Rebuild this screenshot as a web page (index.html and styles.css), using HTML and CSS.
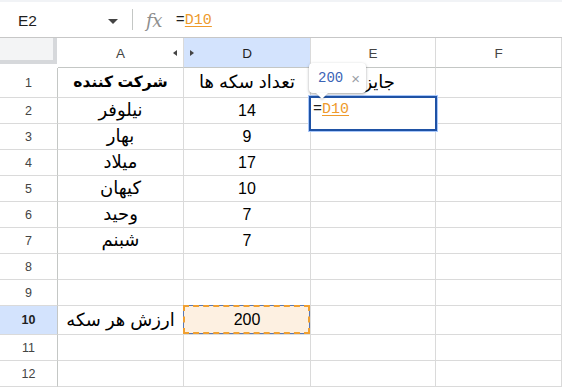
FILE: index.html
```html
<!DOCTYPE html>
<html lang="fa">
<head>
<meta charset="utf-8">
<title>Sheet</title>
<link rel="stylesheet" href="styles.css">
</head>
<body>
<div class="topbar">
  <div class="namebox"><span class="ref">E2</span><span class="caret"></span></div>
  <div class="sep"></div>
  <div class="fx">fx</div>
  <div class="formula">=<span class="refd">D10</span></div>
</div>
<div class="sheet">
  <div class="corner"></div>
  <div class="hdr hdr-a">A</div>
  <div class="hdr hdr-d sel">D</div>
  <div class="hdr">E</div>
  <div class="hdr">F</div>

  <div class="rh">1</div>
  <div class="c fa bold" dir="rtl">شرکت کننده</div>
  <div class="c fa" dir="rtl">تعداد سکه ها</div>
  <div class="c fa e1"><span dir="rtl">جایزه</span>
    <div class="tip" dir="ltr"><span class="tipval">200</span><span class="tipx">×</span></div>
  </div>
  <div class="c"></div>

  <div class="rh">2</div>
  <div class="c fa" dir="rtl">نیلوفر</div>
  <div class="c">14</div>
  <div class="c e2"><div class="editor" dir="ltr">=<span class="refd">D10</span></div></div>
  <div class="c"></div>

  <div class="rh">3</div>
  <div class="c fa" dir="rtl">بهار</div>
  <div class="c">9</div>
  <div class="c"></div>
  <div class="c"></div>

  <div class="rh">4</div>
  <div class="c fa" dir="rtl">میلاد</div>
  <div class="c">17</div>
  <div class="c"></div>
  <div class="c"></div>

  <div class="rh">5</div>
  <div class="c fa" dir="rtl">کیهان</div>
  <div class="c">10</div>
  <div class="c"></div>
  <div class="c"></div>

  <div class="rh">6</div>
  <div class="c fa" dir="rtl">وحید</div>
  <div class="c">7</div>
  <div class="c"></div>
  <div class="c"></div>

  <div class="rh">7</div>
  <div class="c fa" dir="rtl">شبنم</div>
  <div class="c">7</div>
  <div class="c"></div>
  <div class="c"></div>

  <div class="rh">8</div>
  <div class="c"></div>
  <div class="c"></div>
  <div class="c"></div>
  <div class="c"></div>

  <div class="rh">9</div>
  <div class="c"></div>
  <div class="c"></div>
  <div class="c"></div>
  <div class="c"></div>

  <div class="rh sel rh-bold">10</div>
  <div class="c fa" dir="rtl">ارزش هر سکه</div>
  <div class="c d10">200</div>
  <div class="c"></div>
  <div class="c"></div>

  <div class="rh">11</div>
  <div class="c"></div>
  <div class="c"></div>
  <div class="c"></div>
  <div class="c"></div>

  <div class="rh">12</div>
  <div class="c"></div>
  <div class="c"></div>
  <div class="c"></div>
  <div class="c"></div>
</div>
</body>
</html>
```
FILE: styles.css
```css
* { box-sizing: border-box; }
html, body {
  margin: 0;
  padding: 0;
  background: #fff;
}
body {
  width: 562px;
  height: 387px;
  overflow: hidden;
  font-family: "Liberation Sans", "DejaVu Sans", sans-serif;
  color: #000;
}

/* formula bar */
.topbar {
  height: 38px;
  border-top: 2px solid #f1f3f6;
  border-bottom: 1px solid #c7c7c7;
  display: flex;
  align-items: center;
}
.namebox {
  width: 124px;
  padding-left: 18px;
  padding-right: 6px;
  display: flex;
  align-items: center;
  justify-content: space-between;
}
.ref {
  font-size: 15.5px;
  color: #1f1f1f;
  margin-top: 2px;
}
.caret {
  width: 0;
  height: 0;
  border-left: 5px solid transparent;
  border-right: 5px solid transparent;
  border-top: 5px solid #444;
  margin-top: 3px;
}
.sep {
  width: 1px;
  height: 21px;
  margin-left: 8px;
  background: #c4c7c5;
}
.fx {
  margin-left: 13px;
  font-family: "DejaVu Serif", "Liberation Serif", serif;
  font-style: italic;
  font-size: 18px;
  color: #8e8e8e;
  margin-top: 1px;
  letter-spacing: -0.5px;
}
.formula {
  margin-left: 14px;
  font-family: "Liberation Mono", "DejaVu Sans Mono", monospace;
  font-size: 15px;
  color: #1f1f1f;
  margin-top: 2px;
}
.refd {
  color: #ee9a2c;
  text-decoration: underline;
  text-underline-offset: 2px;
}

/* sheet grid */
.sheet {
  display: grid;
  grid-template-columns: 58px 126px 127px 125px 126px;
  grid-template-rows: 30px 30px repeat(8, 26px) 29px 26px 26px;
}
.corner {
  background: #f3f4f5;
  border-right: 4px solid #d6d8db;
  border-bottom: 4px solid #d6d8db;
  margin-right: 1px;
  margin-bottom: 4px;
}
.hdr {
  position: relative;
  display: flex;
  align-items: center;
  justify-content: center;
  font-size: 13.5px;
  color: #444;
  border-right: 1px solid #dadada;
  border-bottom: 1px solid #c4c7c5;
  padding-top: 1px;
}
.hdr.sel {
  background: #d3e3fd;
  color: #1f1f1f;
}
.hdr-a::after {
  content: "";
  position: absolute;
  left: 115px;
  top: 12px;
  width: 0;
  height: 0;
  border-top: 3.5px solid transparent;
  border-bottom: 3.5px solid transparent;
  border-right: 4px solid #444;
}
.hdr-d::before {
  content: "";
  position: absolute;
  left: 6px;
  top: 12px;
  width: 0;
  height: 0;
  border-top: 3.5px solid transparent;
  border-bottom: 3.5px solid transparent;
  border-left: 4px solid #444;
}
.rh {
  display: flex;
  align-items: center;
  justify-content: center;
  font-size: 12.5px;
  color: #444;
  border-right: 1px solid #c4c7c5;
  border-bottom: 1px solid #dadada;
}
.rh.sel {
  background: #d3e3fd;
  color: #1f1f1f;
}
.rh-bold { font-weight: bold; }
.c {
  position: relative;
  display: flex;
  align-items: center;
  justify-content: center;
  font-size: 16px;
  border-right: 1px solid #dadada;
  border-bottom: 1px solid #dadada;
  white-space: nowrap;
}
.c.fa {
  font-size: 18px;
  padding-bottom: 1px;
}
.c.fa.bold {
  font-weight: bold;
  font-size: 15.5px;
}
.e1 > span {
  margin-left: 3px;
}

/* tooltip over E1 */
.tip {
  position: absolute;
  left: -2px;
  top: -5px;
  width: 57px;
  height: 30px;
  background: #fff;
  border-radius: 4px;
  box-shadow: 0 1px 3px rgba(60, 64, 67, 0.35), 0 1px 2px rgba(60, 64, 67, 0.15);
  display: flex;
  align-items: center;
  padding-left: 9px;
  z-index: 3;
  font-family: "Liberation Sans", sans-serif;
}
.tip::after {
  content: "";
  position: absolute;
  left: 7px;
  bottom: -6px;
  width: 0;
  height: 0;
  border-left: 6px solid transparent;
  border-right: 6px solid transparent;
  border-top: 6px solid #fff;
  filter: drop-shadow(0 1px 1px rgba(60, 64, 67, 0.3));
}
.tipval {
  font-family: "Liberation Mono", "DejaVu Sans Mono", monospace;
  font-size: 14px;
  color: #3b64b6;
}
.tipx {
  margin-left: 8px;
  font-size: 15px;
  color: #9aa0a6;
}

/* editor over E2 */
.editor {
  position: absolute;
  left: -2px;
  top: -2px;
  width: 128px;
  height: 35px;
  background: #fff;
  border: 2px solid #1f52a5;
  box-shadow: 0 0 0 1px #a8c7fa;
  padding: 3px 0 0 2px;
  font-family: "Liberation Mono", "DejaVu Sans Mono", monospace;
  font-size: 15px;
  color: #1f1f1f;
  z-index: 2;
  line-height: 18px;
}

/* copied D10 */
.d10 {
  background: #fdf0e1;
}
.d10::after {
  content: "";
  position: absolute;
  left: -1px;
  top: -1px;
  right: 0;
  bottom: 0;
  border: 1px solid #5877b4;
}
.d10::before {
  content: "";
  position: absolute;
  left: -1px;
  top: -1px;
  right: 0;
  bottom: 0;
  border: 2px dashed #f0a031;
  z-index: 1;
}
```
